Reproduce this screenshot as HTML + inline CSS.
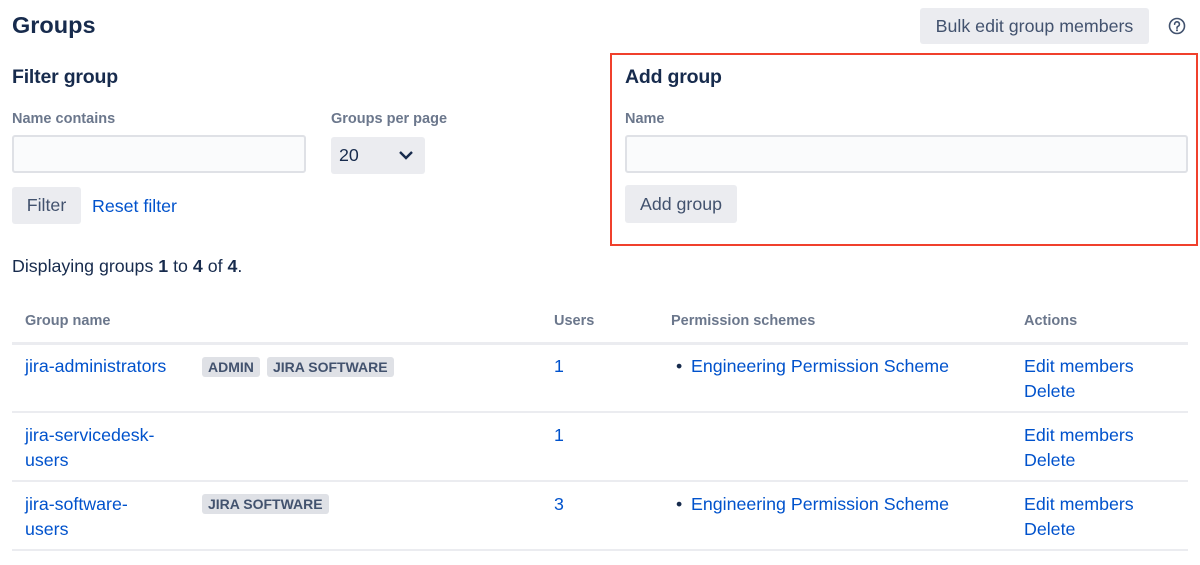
<!DOCTYPE html>
<html><head><style>
*{margin:0;padding:0;box-sizing:border-box}
body{width:1200px;height:565px;background:#fff;font-family:"Liberation Sans",sans-serif;color:#172b4d;position:relative;overflow:hidden;font-size:17.8px}
.a{position:absolute;white-space:nowrap}
.lbl{font-size:14.5px;font-weight:bold;color:#6b778c}
.btn{position:absolute;background:#ebecf0;border-radius:3px;color:#42526e;font-size:17.8px;display:flex;align-items:center;justify-content:center}
.inp{position:absolute;background:#fafbfc;border:2px solid #dfe1e6;border-radius:3px}
.lnk{color:#0052cc}
.lz{position:absolute;height:2px;background:#ebecf0}
.tag{position:absolute;background:#dfe1e6;border-radius:3px;font-size:14px;font-weight:bold;color:#42526e;height:20px;line-height:20px;padding:0 6px}
.th{font-size:14.5px;font-weight:bold;color:#6b778c}
.h2{font-size:19.5px;font-weight:bold;letter-spacing:-0.2px}
</style></head><body>
<div class="a" style="left:12px;top:12px;font-size:23.5px;font-weight:bold">Groups</div>
<div class="btn" style="left:920px;top:8px;width:229px;height:36px">Bulk edit group members</div>
<svg class="a" style="left:1168px;top:17px" width="18" height="18" viewBox="0 0 18 18"><circle cx="9" cy="9" r="7.5" fill="none" stroke="#42526e" stroke-width="1.6"/><path d="M6.6 7.2a2.4 2.4 0 1 1 3.3 2.2c-.6.3-.9.7-.9 1.3v.5" fill="none" stroke="#42526e" stroke-width="1.6" stroke-linecap="round"/><circle cx="9" cy="13.2" r="1" fill="#42526e"/></svg>

<div class="a h2" style="left:12px;top:66px">Filter group</div>
<div class="a lbl" style="left:12px;top:111px">Name contains</div>
<div class="inp" style="left:12px;top:135px;width:294px;height:38px"></div>
<div class="a lbl" style="left:331px;top:111px">Groups per page</div>
<div class="btn" style="left:331px;top:137px;width:94px;height:37px;justify-content:flex-start;padding-left:8px;color:#172b4d">20</div>
<svg class="a" style="left:398px;top:149px" width="16" height="12" viewBox="0 0 16 12"><path d="M2 3l6 6 6-6" fill="none" stroke="#172b4d" stroke-width="2.4"/></svg>
<div class="btn" style="left:12px;top:187px;width:69px;height:37px">Filter</div>
<div class="a lnk" style="left:92px;top:196px">Reset filter</div>

<div class="a" style="left:610px;top:53px;width:588px;height:193px;border:2px solid #f0402c"></div>
<div class="a h2" style="left:625px;top:66px">Add group</div>
<div class="a lbl" style="left:625px;top:111px">Name</div>
<div class="inp" style="left:625px;top:135px;width:563px;height:38px"></div>
<div class="btn" style="left:625px;top:185px;width:112px;height:38px">Add group</div>

<div class="a" style="left:12px;top:256px">Displaying groups <b>1</b> to <b>4</b> of <b>4</b>.</div>

<div class="a th" style="left:25px;top:313px">Group name</div>
<div class="a th" style="left:554px;top:313px">Users</div>
<div class="a th" style="left:671px;top:313px">Permission schemes</div>
<div class="a th" style="left:1024px;top:313px">Actions</div>
<div class="lz" style="left:12px;top:342px;width:1176px;height:3px"></div>

<div class="a lnk" style="left:25px;top:356px">jira-administrators</div>
<div class="tag" style="left:202px;top:357px">ADMIN</div>
<div class="tag" style="left:267px;top:357px">JIRA SOFTWARE</div>
<div class="a lnk" style="left:554px;top:356px">1</div>
<div class="a" style="left:676px;top:356px">•</div>
<div class="a lnk" style="left:691px;top:356px">Engineering Permission Scheme</div>
<div class="a lnk" style="left:1024px;top:356px">Edit members</div>
<div class="a lnk" style="left:1024px;top:381px">Delete</div>
<div class="lz" style="left:12px;top:411px;width:1176px"></div>

<div class="a lnk" style="left:25px;top:425px">jira-servicedesk-</div>
<div class="a lnk" style="left:25px;top:450px">users</div>
<div class="a lnk" style="left:554px;top:425px">1</div>
<div class="a lnk" style="left:1024px;top:425px">Edit members</div>
<div class="a lnk" style="left:1024px;top:450px">Delete</div>
<div class="lz" style="left:12px;top:480px;width:1176px"></div>

<div class="a lnk" style="left:25px;top:494px">jira-software-</div>
<div class="a lnk" style="left:25px;top:519px">users</div>
<div class="tag" style="left:202px;top:494px">JIRA SOFTWARE</div>
<div class="a lnk" style="left:554px;top:494px">3</div>
<div class="a" style="left:676px;top:494px">•</div>
<div class="a lnk" style="left:691px;top:494px">Engineering Permission Scheme</div>
<div class="a lnk" style="left:1024px;top:494px">Edit members</div>
<div class="a lnk" style="left:1024px;top:519px">Delete</div>
<div class="lz" style="left:12px;top:549px;width:1176px"></div>
</body></html>
